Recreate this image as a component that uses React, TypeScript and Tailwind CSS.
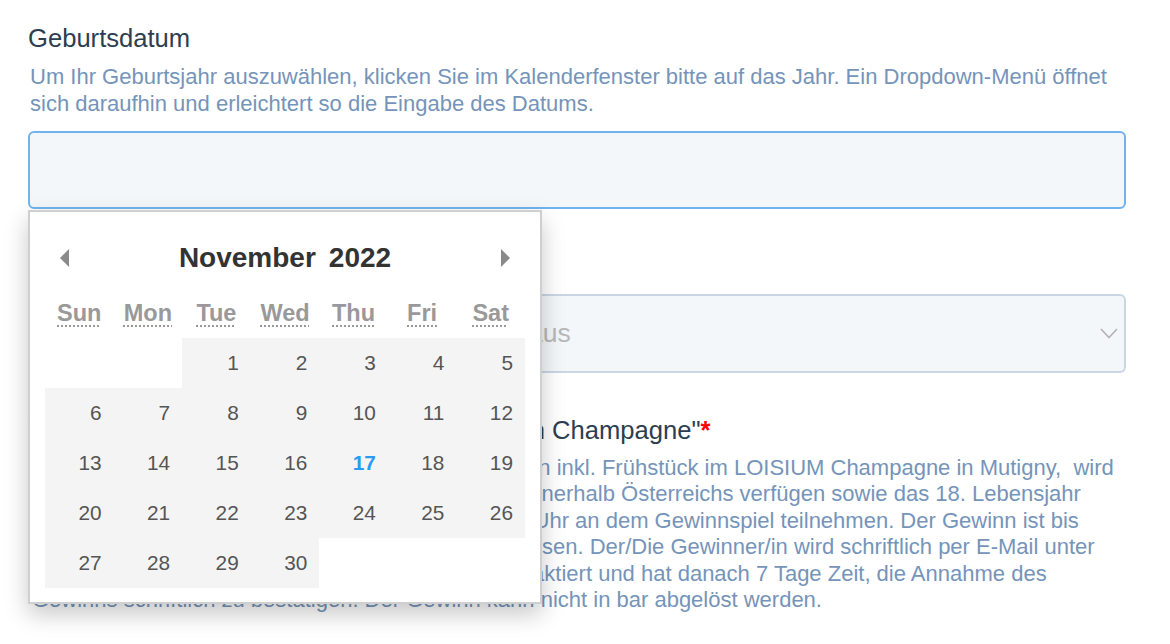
import React from 'react';

const weekdays = [
  { short: 'Sun', long: 'Sunday' },
  { short: 'Mon', long: 'Monday' },
  { short: 'Tue', long: 'Tuesday' },
  { short: 'Wed', long: 'Wednesday' },
  { short: 'Thu', long: 'Thursday' },
  { short: 'Fri', long: 'Friday' },
  { short: 'Sat', long: 'Saturday' },
];

// November 2022 starts on a Tuesday
const cells: (number | null)[] = [
  null, null,
  ...Array.from({ length: 30 }, (_, i) => i + 1),
];
while (cells.length < 35) cells.push(null);

const today = 17;

const Calendar = () => (
  <div className="absolute left-0 top-[calc(100%+1px)] z-10 w-[514px] border-2 border-[#cfcfcf] bg-white px-[15px] pt-[22px] pb-[14px] shadow-[0_10px_22px_rgba(0,0,0,0.22)]">
    <div className="flex h-[48px] items-center justify-between px-[13px]">
      <button type="button" aria-label="Previous month" className="flex h-[24px] w-[12px] items-center justify-center">
        <span className="block h-0 w-0 border-y-[9px] border-r-[9px] border-y-transparent border-r-[#8a8a8a]" />
      </button>
      <div className="flex gap-[13px] text-[28px] font-bold text-[#333333]">
        <span>November</span>
        <span>2022</span>
      </div>
      <button type="button" aria-label="Next month" className="flex h-[24px] w-[12px] items-center justify-center">
        <span className="block h-0 w-0 border-y-[9px] border-l-[9px] border-y-transparent border-l-[#8a8a8a]" />
      </button>
    </div>
    <div className="mt-[8px] grid h-[48px] grid-cols-7 items-center">
      {weekdays.map((d) => (
        <div key={d.short} className="text-center">
          <abbr
            title={d.long}
            className="text-[23.5px] font-bold text-[#999999] underline decoration-dotted decoration-[#999999] decoration-2 underline-offset-[4px]"
          >
            {d.short}
          </abbr>
        </div>
      ))}
    </div>
    <div className="grid grid-cols-7">
      {cells.map((day, i) => (
        <div
          key={i}
          className={
            day
              ? 'flex h-[50px] items-center justify-end bg-[#f4f4f4] pr-[12px]'
              : 'h-[50px] bg-white'
          }
        >
          {day && (
            <span
              className={
                day === today
                  ? 'text-[20.8px] font-bold text-[#2a9bf2]'
                  : 'text-[20.8px] text-[#555555]'
              }
            >
              {day}
            </span>
          )}
        </div>
      ))}
    </div>
  </div>
);

export default function App() {
  return (
    <div className="min-h-screen bg-white font-['Liberation_Sans',Arial,sans-serif]">
      <div className="pl-[28px] pr-[44px] pt-[23px]">
        {/* Geburtsdatum */}
        <div>
          <label className="block text-[25.6px] leading-[30px] text-[#2c3e50]">Geburtsdatum</label>
          <p className="mt-[10px] pl-[2px] text-[22px] leading-[27px] text-[#7594b9]">
            Um Ihr Geburtsjahr auszuwählen, klicken Sie im Kalenderfenster bitte auf das Jahr. Ein Dropdown-Menü öffnet sich daraufhin und erleichtert so die Eingabe des Datums.
          </p>
          <div className="relative mt-[14px]">
            <div className="h-[78px] rounded-[6px] border-2 border-[#70b4ee] bg-[#f4f7fa]" />
            <Calendar />
          </div>
        </div>

        {/* Bundesland */}
        <div className="mt-[43px]">
          <label className="block text-[25.6px] leading-[30px] text-[#2c3e50]">Bundesland</label>
          <div className="mt-[12px] flex h-[79px] items-center justify-between rounded-[6px] border-2 border-[#cad6e4] bg-[#f4f7fa] pl-[34px] pr-[6px]">
            <span className="text-[26.5px] text-[#b8b8b8]">Bitte wählen Sie Ihr Bundesland / Land aus</span>
            <svg width="18" height="11" viewBox="0 0 18 11" fill="none">
              <polyline points="1,1 9,9.5 17,1" stroke="#b3b3b3" strokeWidth="1.6" />
            </svg>
          </div>
        </div>

        {/* Gewinnspiel */}
        <div className="mt-[42px]">
          <label className="block text-[25.6px] leading-[30px] text-[#2c3e50]">
            Teilnahme am Gewinnspiel "Ein Kurzurlaub in Champagne"<span className="font-bold text-[#ff0000]">*</span>
          </label>
          <p className="mt-[10px] pl-[4px] text-[22px] leading-[26.4px] text-[#7594b9]">
            Der Hauptgewinn, eine Übernachtung für 2 Personen inkl. Frühstück im LOISIUM Champagne in Mutigny,{'\u00a0'} wird
            <br />
            unter allen Usern verlost, die über einen Wohnsitz innerhalb Österreichs verfügen sowie das 18. Lebensjahr
            <br />
            vollendet haben. Sie können bis 31.01.2023, 23:59 Uhr an dem Gewinnspiel teilnehmen. Der Gewinn ist bis
            <br />
            31.12.2023 gültig. Eine Übertragung ist ausgeschlossen. Der/Die Gewinner/in wird schriftlich per E-Mail unter
            <br />
            der im Formular angegebenen E-Mail-Adresse kontaktiert und hat danach 7 Tage Zeit, die Annahme des
            <br />
            Gewinns schriftlich zu bestätigen. Der Gewinn kann nicht in bar abgelöst werden.
          </p>
        </div>
      </div>
    </div>
  );
}
